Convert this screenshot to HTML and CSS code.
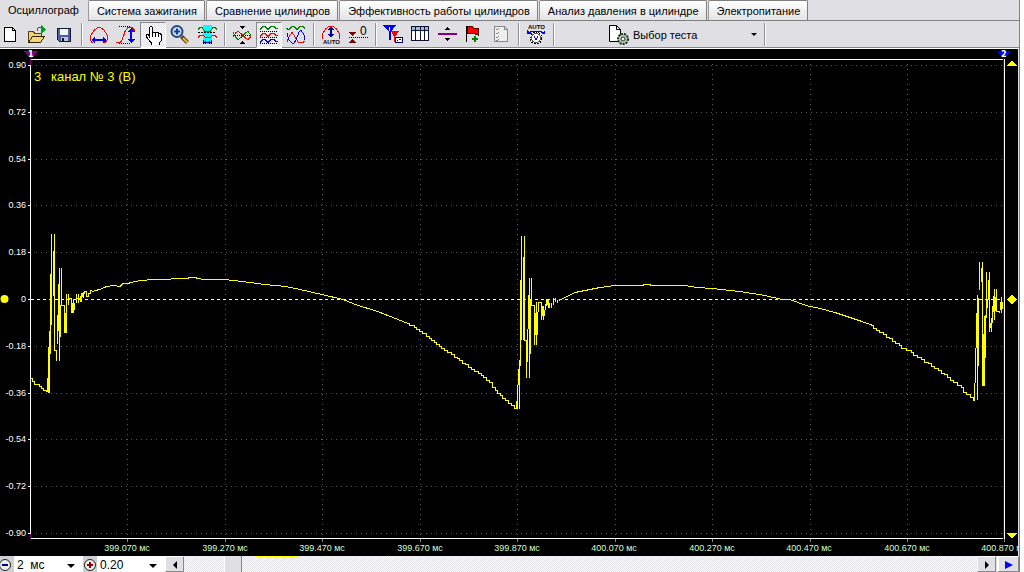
FILE: index.html
```html
<!DOCTYPE html>
<html lang="ru">
<head>
<meta charset="utf-8">
<title>Осциллограф</title>
<link rel="stylesheet" href="styles.css">
</head>
<body>
<div class="app">
  <nav class="tabs" role="tablist">
    <button class="tab active" role="tab" aria-selected="true">Осциллограф</button>
    <button class="tab" role="tab">Система зажигания</button>
    <button class="tab" role="tab">Сравнение цилиндров</button>
    <button class="tab" role="tab">Эффективность работы цилиндров</button>
    <button class="tab" role="tab">Анализ давления в цилиндре</button>
    <button class="tab" role="tab">Электропитание</button>
  </nav>

  <div class="toolbar" role="toolbar">
    <div class="group">
      <button class="tool" aria-label="Новый"><svg viewBox="0 0 20 20"><path d="M4.500 2.500h8l3 3v11h-11z" fill="#fff" stroke="#000"/><path d="M12.500 2.500v3h3" fill="none" stroke="#000"/></svg></button>
      <button class="tool" aria-label="Открыть"><svg viewBox="0 0 20 20"><path d="M1.500 17V6.500h5l1 2h7v3" fill="#e8d080" stroke="#554411"/><path d="M1.500 17.500l4-6h12l-4 6z" fill="#f0d878" stroke="#332200"/><path d="M10 6c0-3 1-4 4-4" fill="none" stroke="#008000"/><path d="M14 0v9l5-4z" fill="#00a020"/></svg></button>
      <button class="tool" aria-label="Сохранить"><svg viewBox="0 0 20 20"><path d="M3.500 3.500h13v13h-11l-2-2z" fill="#50609c" stroke="#181830"/><path d="M6 4h8v6H6z" fill="#f4f8ff"/><path d="M7 12h7v4H7z" fill="#b8c8d8"/><path d="M8 13h2v3H8z" fill="#101820"/></svg></button>
    </div>
    <span class="sep"></span>
    <div class="group">
      <button class="tool" aria-label="Период"><svg viewBox="0 0 20 20"><path d="M4 17.500H2.500L1.500 15v-4l3-5 4-3.500h3L15 5l3 5v5l-1.500 2.500H15" fill="none" stroke="#f00"/><path d="M4 15h12" stroke="#00f" stroke-width="2"/><path d="M2 15l4-3v6zM18 15l-4-3v6z" fill="#00f"/></svg></button>
      <button class="tool" aria-label="Амплитуда"><svg viewBox="0 0 20 20"><path d="M0 17.500h4l2-2 3-9 3-4h4l3 3" fill="none" stroke="#f00"/><path d="M3 1.500h12M3 18.500h12" stroke="#000" stroke-dasharray="1 1"/><path d="M15 6v9" stroke="#00f" stroke-width="2"/><path d="M15 3l-4 4h8zM15 18l-4-4h8z" fill="#00f"/></svg></button>
      <button class="tool pressed" aria-label="Рука" aria-pressed="true"><svg viewBox="0 0 20 20"><path d="M6.500 12V2.500l1-1h1l1 1V8l1-1h1.500l1 1 1-.5h1l1 1.500 1-.5 1.500 1.500v5l-2 3v2h-8v-2l-2-2-3.500-5 .5-1.500h1.500z" fill="#fff" stroke="#000"/><path d="M9.500 8v4M12.500 8v4M15.500 9v3" stroke="#000"/></svg></button>
      <button class="tool smooth" aria-label="Увеличить"><svg viewBox="0 0 20 20"><path d="M11.500 11.500l6 6" stroke="#5c4420" stroke-width="4"/><path d="M13 13l5 5" stroke="#e8b850" stroke-width="2"/><circle cx="7" cy="6.500" r="5.500" fill="#c4e4ff" stroke="#284878" stroke-width="2"/><path d="M4 6.500h6M7 3.500v6" stroke="#1838a0" stroke-width="2"/></svg></button>
      <button class="tool" aria-label="Фильтр"><svg viewBox="0 0 20 20"><path d="M6 0h9v19H6z" fill="#0ff"/><path d="M1 4.500l2-2h2l3 4h5l3-4h2l2 2" fill="none" stroke="#008000"/><path d="M1 7.500h18" stroke="#000" stroke-dasharray="2 1"/><path d="M1 12.500l2-2h3l3 2h4l3-2h2l2 2" fill="none" stroke="#f00"/><path d="M6.500 15v4M14.500 15v4M7 17.500h7" stroke="#00008b"/><path d="M7 17.500l2-2v4zM14 17.500l-2-2v4z" fill="#00008b"/></svg></button>
    </div>
    <span class="sep"></span>
    <div class="group">
      <button class="tool" aria-label="Совместить"><svg viewBox="0 0 20 20"><path d="M1 11.500l3-4 2-1 3 2 5 5 2 1 3-3" fill="none" stroke="#f00"/><path d="M1 7.500l3 5 2 2 3-2 5-5 2-1 3 4" fill="none" stroke="#008000"/><path d="M1 10.500h18" stroke="#000" stroke-dasharray="1 1"/><path d="M7 1h6l-3 3zM7 19h6l-3-3z"/></svg></button>
      <button class="tool pressed" aria-label="Раздельно" aria-pressed="true"><svg viewBox="0 0 20 20"><path d="M1 4.500l3-3h2l3 3 3-3h3l2 2h2" fill="none" stroke="#008000"/><path d="M1 11.500l3-3h2l3 3 3-3h3l2 2h2" fill="none" stroke="#f00"/><path d="M1 17.500l3-3h2l3 3 3-3h3l2 2h2" fill="none" stroke="#00f"/><path d="M1 6.500h18M1 12.500h18M1 18.500h18" stroke="#000" stroke-dasharray="1 1"/></svg></button>
      <button class="tool" aria-label="Вместе"><svg viewBox="0 0 20 20"><path d="M0 3.500l3 1 3-3h2l3 3 3-3h3l2 2" fill="none" stroke="#008000"/><path d="M1 17l2-5 3-5 3 5 3 5 4 1 3-2" fill="none" stroke="#f00"/><path d="M1 8l2 7 3 3h2l2-3 3-8 2-2 3 5 1 5" fill="none" stroke="#00f"/></svg></button>
    </div>
    <span class="sep"></span>
    <div class="group">
      <button class="tool" aria-label="Автомасштаб"><svg viewBox="0 0 20 20"><path d="M1.500 14V9l3-5 4-3h3l4 3 3 5v5" fill="none" stroke="#f00"/><path d="M10 3v9" stroke="#00008b" stroke-width="2"/><path d="M10 1L7 5h6zM10 13l-3-4h6z" fill="#00008b"/><text x="2" y="19" class="auto">AUTO</text></svg></button>
      <button class="tool" aria-label="Ноль"><svg viewBox="0 0 20 20"><path d="M1 7h7l-3.500 4zM1 18h7l-3.500-4z" fill="#800000"/><path d="M1 12.500h19" stroke="#000" stroke-dasharray="1 1"/><text x="12" y="10" class="zero">0</text></svg></button>
    </div>
    <span class="sep"></span>
    <div class="group">
      <button class="tool" aria-label="Маркеры"><svg viewBox="0 0 20 20"><path d="M8 6h8l-4 6v5h-1v-5z" fill="#f00"/><path d="M0 0h13L8 7v8H6V7z" fill="#00f"/><path d="M6.500 2v4" stroke="#fff"/><path d="M12.500 12.500h7v5h-7z" fill="#fff" stroke="#00006b"/><path d="M14 15h1M16 14h2" stroke="#00006b"/></svg></button>
      <button class="tool" aria-label="Таблица"><svg viewBox="0 0 20 20"><path d="M1.500 1.500h17v14h-17z" fill="#fff" stroke="#101030"/><path d="M2 2h16v3H2z" fill="#90c0e8"/><path d="M1 5.500h18M5.500 2v13M10.500 2v13M14.500 2v13" stroke="#101030"/></svg></button>
      <button class="tool" aria-label="Разделитель"><svg viewBox="0 0 20 20"><path d="M1 9h19" stroke="#800080" stroke-width="2"/><path d="M8 5h5l-2.500-3zM8 13h5l-2.500 3z"/></svg></button>
      <button class="tool" aria-label="Добавить флаг"><svg viewBox="0 0 20 20"><path d="M2.500 1v16" stroke="#000"/><path d="M3 2l2-1h3l2 2h4v7l-3-1-3-1-5 1z" fill="#f00" stroke="#500"/><path d="M8 14h6M11 11v6" stroke="#008000" stroke-width="2"/></svg></button>
      <button class="tool" aria-label="Список"><svg viewBox="0 0 20 20"><path d="M3.500 1.500h10l3 3v12h-13z" fill="#eee" stroke="#888"/><path d="M13.500 1.500v3h3M5 4l1 1 2-2M5 8l1 1 2-2M5 12l1 1 2-2M5 15l1 1 2-2" fill="none" stroke="#888"/></svg></button>
    </div>
    <span class="sep"></span>
    <div class="group">
      <button class="tool" aria-label="Авто вольтметр"><svg viewBox="0 0 20 20"><text x="2" y="4" class="auto">AUTO</text><path d="M3 7.500l3-1h8l3 1" fill="none" stroke="#00f"/><path d="M1 9V5l4 4zM19 9V5l-4 4z" fill="#00f"/><circle cx="10" cy="13" r="6" fill="#fff" stroke="#000" stroke-dasharray="2 1"/><circle cx="10" cy="13" r="4.500" fill="#fff" stroke="#555"/><path d="M8 11l2 4 2-4" fill="none" stroke="#00f"/></svg></button>
    </div>
    <span class="sep"></span>
    <button class="chooser">
      <svg viewBox="0 0 20 20"><path d="M.5.500h7l4 4v12H.5z" fill="#fff" stroke="#000"/><path d="M7.500.500v4h4" fill="none" stroke="#000"/><circle cx="14" cy="14" r="5" fill="#b8d0b8" stroke="#203020" stroke-width="2" stroke-dasharray="2 1"/><circle cx="14" cy="14" r="2" fill="#fff" stroke="#203020"/></svg>
      <span>Выбор теста</span><span class="caret"></span>
    </button>
    <span class="sep"></span>
  </div>

  <main class="scope">
    <svg class="plot" viewBox="0 49 1018 507" preserveAspectRatio="xMinYMin meet" role="img" aria-label="канал № 3 (В)">
      <g class="grid">
        <path d="M36 65.500H1002M36 112.500H1002M36 159.500H1002M36 205.500H1002M36 252.500H1002M36 346.500H1002M36 393.500H1002M36 439.500H1002M36 486.500H1002M36 533.500H1002"/>
        <path d="M127.500 64V538M225.500 64V538M322.500 64V538M420.500 64V538M517.500 64V538M615.500 64V538M712.500 64V538M810.500 64V538M907.500 64V538"/>
      </g>
      <path class="zero-line" d="M31 299.500H1003"/>
      <path class="ticks" d="M127.500 539v3M225.500 539v3M322.500 539v3M420.500 539v3M517.500 539v3M615.500 539v3M712.500 539v3M810.500 539v3M907.500 539v3M1004.500 539v3"/>
      <path class="frame" d="M30.500 59V539M30 59.500H1004M30 538.500H1004M1004.500 59V539M28 65.500h3M28 112.500h3M28 159.500h3M28 205.500h3M28 252.500h3M28 299.500h3M28 346.500h3M28 393.500h3M28 439.500h3M28 486.500h3M28 533.500h3"/>
      <path class="cursor-one" d="M30.500 58v7M30.500 534v5"/>
      <path class="cursor-two" d="M1003.500 58V539"/>
      <g class="wave">
        <path d="M31 378.500H32.500V381.500H34.500V384.500H39.500V386.500H41.500V388.500H43.500V390.500H46.500V391.500H47.500V378.500H48.500V347.500M49.500 393V331M48.500 393V347M50.500 354V274M51.500 325V234M53.500 296V251M54.500 234V350.500H56.500V361M57.500 344V315M58.500 331V284M59.500 268V361M60.500 337V305M61.500 268V305.500H64.500V333M65.500 333V313M66.500 333V294M68.500 294V305M68 298.500H71.500V313M72.500 313V303M73.500 313V299M74.500 310V303M76.500 294V303M77 298.500H81M78.500 294V303M80.500 302V296M81.500 302V293M83.500 298V292"/>
        <path d="M82.500 296.500V293.500H84.500V291.500H86.500V296.500H88.500V293.500H90.500V290.500L93 291.500L95 290.500L100 289.500L104 287.500L107 286.500L113 285.500L120 286.500L123 283.500H128L131 282.500L140 280.500L155 279.500L188 278.500V277.500H196V278.500L206 279.500L225 279.500L250 282.500L265 284.500L286 286.500L300 289.500L322 294.500L343 299.500L358 305.500L375 310.500L393 317.500L408 323.500"/>
        <path d="M408 323.500H409.500V325.500H414.500V327.500H416.500V329.500H419.500V331.500H422.500V333.500H426.500V336.500H429.500V338.500H431.500V340.500H434.500V342.500H436.500V344.500H439.500V346.500H441.500V348.500H444.500V350.500H447.500V352.500H451.500V354.500H454.500V357.500H457.500V358.500H459.500V360.500H462.500V363.500H465.500V364.500H468.500V367.500H471.500V369.500H474.500V371.500H478.500V373.500H481.500V375.500H483.500V377.500H486.500V380.500H489.500V382.500H492.500V387.500H495.500V390.500H497.500V393.500H500.500V395.500H502.500V398.500H505.500V400.500H508.500V403.500H511.500V405.500H514.500V408.500H516.500V401"/>
        <path d="M516.500 409V401M517.500 409V385M518.500 385V369M519.500 409V360M520.500 366V280M521.500 340V236M523.500 257V340M524.500 236V340.500H526.500V378M527.500 362V329M528.500 329V295M529.500 278V378M530.500 354V300M531.500 278V305.500H534.500V345M535.500 335V313M536.500 345V302M537.500 335V312M538.500 312V302.500H541.500V320M542.500 316V306M543.500 320V306M544.500 316V310M545.500 310V304M546.500 306V299M547.500 299V305M548.500 300V308M549.500 303V308M551.500 303V308M553.500 298V305M555.500 298V302M557.500 300V303M559.500 299V301"/>
        <path d="M559 300.500L565 297.500L575 292.500L585 290.500L600 287.500L615 285.500L643 285.500V284.500H650V285.500H685L697 287.500L712 288.500L740 291.500L765 295.500L782 299.500L790 299.500L806 305.500L820 308.500L835 312.500L850 317.500L862 321.500L870 324.500"/>
        <path d="M870 324.500H871.500V325.500H873.500V328.500H876.500V330.500H879.500V332.500H883.500V334.500H886.500V337.500H889.500V338.500H892.500V341.500H895.500V343.500H899.500V345.500H901.500V348.500H906.500V350.500H911.500V352.500H913.500V355.500H917.500V357.500H921.500V359.500H924.500V362.500H928.500V363.500H931.500V366.500H934.500V368.500H938.500V370.500H941.500V373.500H944.500V374.500H947.500V377.500H950.500V380.500H953.500V382.500H957.500V385.500H961.500V387.500H963.500V392.500H966.500V394.500H970.500V397.500H973.500V400.500H974.500V383"/>
        <path d="M974.500 400V383M975.500 383V348M976.500 348V313M977.500 400V295M978.500 366V298M979.500 262V290M981.500 268V282M982.500 262V386M983.500 386V334M984.500 386V316M985.500 358V315M986.500 318V272M987.500 308V300M988.500 300V280M989.500 272V332M990.500 328V323M991.500 332V318M992.500 323V306M993.500 312V296M994.500 289V320M995.500 311V297M996.500 289V311.500H999.500V313M1000.500 310V302M1001.500 297V313M1002.500 309V302"/>
      </g>
      <path class="purple" d="M23 51h15l-7 8z"/><path class="blue" d="M996 51h15l-7 8z"/>
      <text class="marker-label" x="28" y="57">1</text><text class="marker-label" x="1001" y="57">2</text>
      <circle class="yellow round-mark" cx="4.500" cy="299" r="4"/>
      <path class="yellow" d="M1007 299.500l5-5 5 5-5 5zM1007 66h10l-5-6zM1007 533h10l-5 6z"/>
      <text class="channel" x="34" y="81">3</text><text class="channel" x="51" y="81">канал № 3 (В)</text>
      <g class="y-labels">
        <text x="26" y="68">0.90</text><text x="26" y="115">0.72</text><text x="26" y="162">0.54</text><text x="26" y="208">0.36</text><text x="26" y="255">0.18</text><text x="26" y="302">0</text><text x="26" y="349">-0.18</text><text x="26" y="396">-0.36</text><text x="26" y="442">-0.54</text><text x="26" y="489">-0.72</text><text x="26" y="536">-0.90</text>
      </g>
      <g class="x-labels">
        <text x="127" y="551">399.070 мс</text><text x="225" y="551">399.270 мс</text><text x="322" y="551">399.470 мс</text><text x="420" y="551">399.670 мс</text><text x="517" y="551">399.870 мс</text><text x="614" y="551">400.070 мс</text><text x="712" y="551">400.270 мс</text><text x="809" y="551">400.470 мс</text><text x="907" y="551">400.670 мс</text><text x="1004" y="551">400.870 мс</text>
      </g>
    </svg>
  </main>

  <footer class="bottom">
    <button class="round" aria-label="Уменьшить"><svg viewBox="0 0 14 14"><circle cx="5" cy="7" r="5.500" fill="#eee" stroke="#222"/><path d="M2 7h6" stroke="#00008b" stroke-width="2"/></svg></button>
    <span class="combo time"><select aria-label="Развёртка"><option>2&nbsp; мс</option></select></span>
    <button class="round" aria-label="Увеличить"><svg viewBox="0 0 14 14"><circle cx="7" cy="7" r="5.500" fill="#eee" stroke="#222"/><path d="M4 7h6M7 4v6" stroke="#900000" stroke-width="2"/></svg></button>
    <span class="combo"><select aria-label="Масштаб"><option>0.20</option></select></span>
    <button class="arrow" aria-label="Назад"><svg viewBox="0 0 14 14"><path d="M9 3v8L5 7z"/></svg></button>
    <div class="track"><span class="used"></span><span class="thumb"></span></div>
    <button class="arrow" aria-label="Вперёд"><svg viewBox="0 0 14 14"><path d="M5 3v8l4-4z"/></svg></button>
    <button class="arrow play" aria-label="Пуск"><svg viewBox="0 0 14 14"><path d="M3 3v8l8-4z" fill="#00f"/></svg></button>
  </footer>
</div>
</body>
</html>
```
FILE: styles.css
```css
* { box-sizing: border-box; }
body { margin: 0; background: #fff; font: 12px "Liberation Sans", Arial, sans-serif; color: #000; }
button, select { font: inherit; color: inherit; margin: 0; padding: 0; border: 0; background: none; }
.app { height: 100vh; margin-right: 4px; display: flex; flex-direction: column; overflow: hidden; background: #e0dfe3; border-right: 1px solid #808080; }

.tabs { display: flex; height: 21px; border-bottom: 1px solid #808080; }
.tab { height: 20px; padding: 0 7px 0 8px; margin-right: 1px; border: 1px solid #808080; border-left-color: #999; border-bottom: 0; border-radius: 2px 2px 0 0; background: linear-gradient(#fff, #e4e4e8); font-size: 11px; white-space: nowrap; }
.tab.active { height: 21px; border: 0; margin: 0; padding: 0 9px 2px 8px; background: #e0dfe3; }

.toolbar { display: flex; align-items: center; height: 28px; border-bottom: 1px solid #fff; box-shadow: inset 0 -1px #888; }
.group { display: flex; gap: 7px; }
.tool { display: flex; align-items: center; justify-content: center; width: 20px; height: 26px; }
.tool svg { width: 20px; height: 20px; shape-rendering: crispEdges; }
.tool.smooth svg { shape-rendering: auto; }
.pressed { width: 26px; margin: 0 -3px; border: 1px solid; border-color: #888 #fff #fff #888; background: repeating-conic-gradient(#fff 0 25%, #e0dfe3 0 50%) 0 0 / 2px 2px; }
.sep { width: 2px; height: 23px; margin: 0 6px 0 7px; border-left: 1px solid #909098; border-right: 1px solid #fff; }
.auto { font: bold 6px "Liberation Sans", sans-serif; }
.zero { font: 12px "Liberation Sans", sans-serif; }
.chooser { display: flex; align-items: center; gap: 4px; width: 148px; margin-left: 48px; font-size: 11px; }
.chooser svg { width: 20px; height: 20px; }
.chooser .caret { margin-left: auto; }
.caret { border: 3px solid transparent; border-top-color: #000; border-bottom: 0; }

.scope { flex: 1; min-height: 0; margin-right: 1px; background: #000; }
.plot { display: block; width: 100%; height: 100%; shape-rendering: crispEdges; }
.grid path { stroke: #585858; stroke-dasharray: 1 4; }
.zero-line { stroke: #fff; stroke-dasharray: 3 3; }
.frame { stroke: #fff; }
.ticks { stroke: #888; }
.cursor-one { stroke: #800080; }
.cursor-two { stroke: #00f; }
.wave { stroke: #ff0; fill: none; }
.purple { fill: #800080; }
.blue { fill: #00f; }
.yellow { fill: #ff0; }
.round-mark { shape-rendering: auto; }
.marker-label { fill: #fff; font: bold 8px "DejaVu Sans", sans-serif; }
.channel { fill: #ff0; font-size: 13px; }
.y-labels { fill: #fff; font-size: 9px; text-anchor: end; }
.x-labels { fill: #d0ffd0; font-size: 9px; text-anchor: middle; }

.bottom { display: flex; height: 16px; }
.round { width: 14px; background: #d0d0d4; }
.round svg, .arrow svg { display: block; width: 14px; height: 14px; margin: 1px auto 0; }
.combo { position: relative; width: 68px; background: #fff; }
.combo.time { width: 69px; }
.combo::after { content: ""; position: absolute; right: 8px; top: 8px; border: 4px solid transparent; border-top-color: #000; border-bottom: 0; pointer-events: none; }
.combo select { appearance: none; display: block; width: 100%; height: 17px; padding-left: 3px; }
.arrow { width: 19px; background: #e0dfe3; border: 1px solid; border-color: #fff #888 #888 #fff; }
.play { width: 22px; border-left-width: 2px; margin-left: 1px; }
.track { flex: 1; position: relative; background: repeating-conic-gradient(#fff 0 25%, #e0dfe3 0 50%) 0 0 / 2px 2px; }
.thumb { position: absolute; left: 40px; top: 0; width: 18px; height: 16px; background: #e0dfe3; border-left: 1px solid #fff; border-right: 1px solid #888; }
.used { position: absolute; left: 72px; top: 0; width: 42px; height: 1px; background: #ff0; }
```
